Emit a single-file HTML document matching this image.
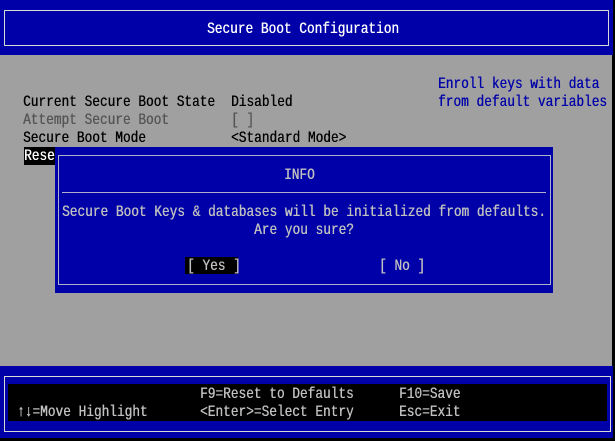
<!DOCTYPE html>
<html><head><meta charset="utf-8"><style>
body{margin:0;width:615px;height:441px;background:#000;position:relative;overflow:hidden}
.a{position:absolute}
.t{position:absolute;font-family:"Liberation Mono",monospace;font-size:16px;line-height:18px;white-space:pre;transform:scaleX(.8);transform-origin:0 0;margin-top:1px;text-shadow:0.4px 0 0 currentColor}
</style></head><body>
<div class="a" style="left:0;top:55px;width:612px;height:311px;background:#a0a0a0"></div>
<div class="a" style="left:0;top:0;width:613px;height:55px;background:#0000a8"></div>
<div class="a" style="left:4px;top:10px;width:603px;height:34px;border:1px solid #d8d8d8"></div>
<div class="t" style="left:207px;top:19px;color:#fff">Secure Boot Configuration</div>

<div class="t" style="left:23px;top:92px;color:#000">Current Secure Boot State</div>
<div class="t" style="left:231px;top:92px;color:#000">Disabled</div>
<div class="t" style="left:23px;top:110px;color:#555">Attempt Secure Boot</div>
<div class="t" style="left:231px;top:110px;color:#555">[ ]</div>
<div class="t" style="left:23px;top:128px;color:#000">Secure Boot Mode</div>
<div class="t" style="left:231px;top:128px;color:#000">&lt;Standard Mode&gt;</div>
<div class="a" style="left:24px;top:147px;width:31px;height:18px;background:#000"></div>
<div class="t" style="left:24px;top:146px;color:#fff">Rese</div>
<div class="t" style="left:438px;top:74px;color:#0000a8">Enroll keys with data</div>
<div class="t" style="left:438px;top:92px;color:#0000a8">from default variables</div>

<div class="a" style="left:55px;top:147px;width:498px;height:146px;background:#0000a8"></div>
<div class="a" style="left:58px;top:155px;width:491px;height:128px;border:1px solid #b0b0c8"></div>
<div class="a" style="left:62px;top:192px;width:484px;height:1px;background:#b0b0c8"></div>
<div class="t" style="left:284px;top:165px;color:#c0c0c0">INFO</div>
<div class="t" style="left:62px;top:202px;color:#c0c0c0">Secure Boot Keys &amp; databases will be initialized from defaults.</div>
<div class="t" style="left:254px;top:220px;color:#c0c0c0">Are you sure?</div>
<div class="a" style="left:185px;top:257px;width:53px;height:17px;background:#000"></div>
<div class="t" style="left:187px;top:256px;color:#c0c0c0">[ Yes ]</div>
<div class="t" style="left:379px;top:256px;color:#c0c0c0">[ No ]</div>

<div class="a" style="left:0;top:366px;width:613px;height:72px;background:#0000a8"></div>
<div class="a" style="left:4px;top:376px;width:605px;height:54px;border:1px solid #d8d8d8"></div>
<div class="a" style="left:8px;top:384px;width:599px;height:37px;background:#000"></div>
<div class="t" style="left:200px;top:384px;color:#c0c0c0">F9=Reset to Defaults</div>
<div class="t" style="left:399px;top:384px;color:#c0c0c0">F10=Save</div>
<div class="t" style="left:17px;top:402px;color:#c0c0c0">↑↓=Move Highlight</div>
<div class="t" style="left:200px;top:402px;color:#c0c0c0">&lt;Enter&gt;=Select Entry</div>
<div class="t" style="left:399px;top:402px;color:#c0c0c0">Esc=Exit</div>
</body></html>
